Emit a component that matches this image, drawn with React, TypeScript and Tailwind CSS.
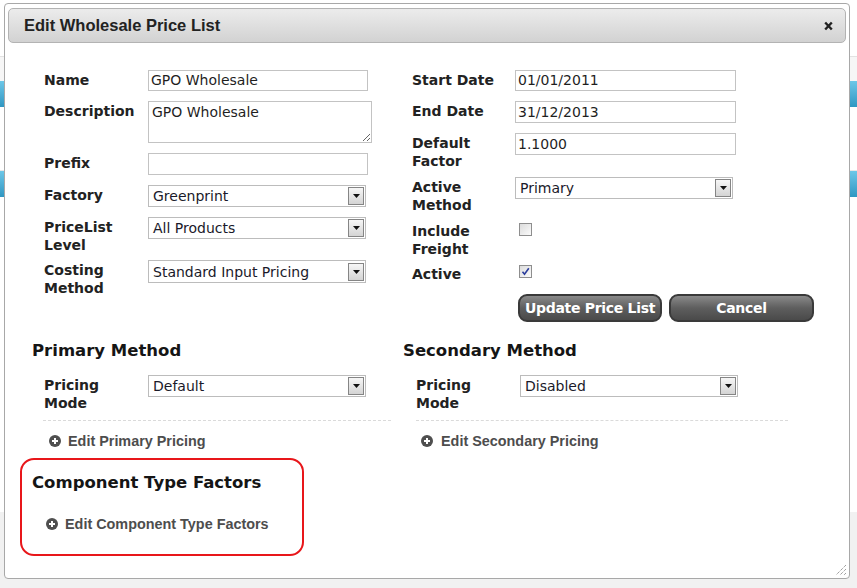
import React from "react";

const verdana = "font-['DejaVu_Sans','Verdana',sans-serif]";
const arial = "font-['Liberation_Sans','Arial',sans-serif]";

function Label({ children }: { children: React.ReactNode }) {
  return (
    <div className={`w-[104px] shrink-0 pt-[1px] text-[14px] leading-[18px] font-bold text-[#222] ${verdana}`}>
      {children}
    </div>
  );
}

function TextInput({ value, className = "" }: { value: string; className?: string }) {
  return (
    <input
      readOnly
      value={value}
      className={`border border-[#c3c3c3] bg-white px-[2px] text-[14px] text-[#1f1f1f] outline-none ${verdana} ${className}`}
    />
  );
}

function Select({ value, className = "" }: { value: string; className?: string }) {
  return (
    <div
      className={`flex items-center justify-between border border-[#bcbcbc] bg-white pl-[4px] pr-[1px] text-[14px] text-[#1a1a2a] ${verdana} ${className}`}
    >
      <span className="leading-none">{value}</span>
      <div className="flex h-[18px] w-[16px] items-center justify-center border border-[#858585] bg-gradient-to-b from-[#f6f6f6] to-[#d4d4d4]">
        <svg width="7" height="4" viewBox="0 0 7 4">
          <path d="M0 0h7L3.5 4z" fill="#111" />
        </svg>
      </div>
    </div>
  );
}

function Checkbox({ checked }: { checked?: boolean }) {
  return (
    <div className="flex h-[13px] w-[13px] items-center justify-center border border-[#8e8e8e] bg-gradient-to-br from-[#dcdcdc] to-[#fbfbfb]">
      {checked && (
        <svg width="9" height="9" viewBox="0 0 9 9">
          <path d="M1.5 4.8l2 2.4L7.8 1.2" stroke="#2b3d9c" strokeWidth="1.6" fill="none" />
        </svg>
      )}
    </div>
  );
}

function PlusCircle() {
  return (
    <svg width="12" height="12" viewBox="0 0 12 12" className="shrink-0">
      <circle cx="6" cy="6" r="6" fill="#4f4f4f" />
      <path d="M6 3v6M3 6h6" stroke="#fff" strokeWidth="2" />
    </svg>
  );
}

function EditLink({ text, gap }: { text: string; gap: string }) {
  return (
    <div className={`flex items-center ${gap} text-[14.4px] leading-[18px] font-bold text-[#4d4d4d] ${arial}`}>
      <PlusCircle />
      <span>{text}</span>
    </div>
  );
}

function DarkButton({ children, className = "" }: { children: React.ReactNode; className?: string }) {
  return (
    <button
      type="button"
      className={`h-[28px] rounded-[9px] border-2 border-[#3a3a3a] bg-gradient-to-b from-[#8a8a8a] via-[#5e5e5e] to-[#4a4a4a] text-[14px] font-bold tracking-[-0.3px] text-white ${verdana} ${className}`}
    >
      {children}
    </button>
  );
}

function Heading({ children }: { children: React.ReactNode }) {
  return (
    <h3 className={`h-[20px] text-[16.5px] leading-[20px] font-bold text-[#151515] ${verdana}`}>{children}</h3>
  );
}

export default function App() {
  return (
    <div className="relative h-[588px] w-[857px] overflow-hidden bg-white">
      {/* page behind the dialog */}
      <div className="flex flex-col">
        <div className="h-[57px] border-b border-[#e2e2e2]" />
        <div className="h-[24px] bg-[#f6f6f6]" />
        <div className="h-[26px] bg-gradient-to-b from-[#6cc7e8] to-[#2f97c2]" />
        <div className="h-[64px] border-b border-[#e6e6e6]" />
        <div className="h-[26px] bg-gradient-to-b from-[#6cc7e8] to-[#2f97c2]" />
        <div className="h-[315px]" />
        <div className="h-[80px] bg-[#f1f1f1]" />
      </div>

      {/* dialog */}
      <div className="absolute left-[4px] top-[3px] flex h-[576px] w-[846px] flex-col rounded-[4px] border border-[#a8a8a8] bg-white">
        <div className="mx-[3px] mt-[4px] flex h-[35px] items-center justify-between rounded-[5px] border border-[#b3b3b3] bg-gradient-to-b from-[#ececec] to-[#d2d2d2] pl-[15px] pr-[12px]">
          <span className={`text-[16.5px] font-bold text-[#222] ${arial}`}>Edit Wholesale Price List</span>
          <svg width="9" height="10" viewBox="0 0 9 10">
            <path d="M1.2 1.5l6.6 7M7.8 1.5l-6.6 7" stroke="#222" strokeWidth="2.4" />
          </svg>
        </div>

        {/* top form */}
        <div className="mt-[27px] flex pl-[39px]">
          <div className="flex w-[368px] flex-col">
            <div className="flex h-[31px] items-start">
              <Label>Name</Label>
              <TextInput value="GPO Wholesale" className="h-[21px] w-[220px]" />
            </div>
            <div className="flex h-[52px] items-start">
              <Label>Description</Label>
              <textarea
                readOnly
                value="GPO Wholesale"
                className={`h-[42px] w-[224px] border border-[#c3c3c3] px-[3px] pt-[1px] text-[14px] leading-[18px] text-[#1f1f1f] outline-none ${verdana}`}
              />
            </div>
            <div className="flex h-[32px] items-start">
              <Label>Prefix</Label>
              <TextInput value="" className="h-[22px] w-[220px]" />
            </div>
            <div className="flex h-[32px] items-start">
              <Label>Factory</Label>
              <Select value="Greenprint" className="h-[22px] w-[218px]" />
            </div>
            <div className="flex h-[43px] items-start">
              <Label>
                PriceList
                <br />
                Level
              </Label>
              <Select value="All Products" className="h-[22px] w-[218px]" />
            </div>
            <div className="flex items-start">
              <Label>
                Costing
                <br />
                Method
              </Label>
              <Select value="Standard Input Pricing" className="h-[23px] w-[218px]" />
            </div>
          </div>

          <div className="flex flex-col">
            <div className="flex h-[31px] items-start">
              <Label>Start Date</Label>
              <TextInput value="01/01/2011" className="ml-[-1px] h-[21px] w-[221px]" />
            </div>
            <div className="flex h-[32px] items-start">
              <Label>End Date</Label>
              <TextInput value="31/12/2013" className="ml-[-1px] h-[22px] w-[221px]" />
            </div>
            <div className="flex h-[44px] items-start">
              <Label>
                Default
                <br />
                Factor
              </Label>
              <TextInput value="1.1000" className="ml-[-1px] h-[22px] w-[221px]" />
            </div>
            <div className="flex h-[44px] items-start">
              <Label>
                Active
                <br />
                Method
              </Label>
              <Select value="Primary" className="ml-[-1px] h-[22px] w-[218px]" />
            </div>
            <div className="flex h-[43px] items-start">
              <Label>
                Include
                <br />
                Freight
              </Label>
              <div className="ml-[3px] mt-[2px]">
                <Checkbox />
              </div>
            </div>
            <div className="flex h-[30px] items-start">
              <Label>Active</Label>
              <div className="ml-[3px] mt-[1px]">
                <Checkbox checked />
              </div>
            </div>
            <div className="flex gap-[7px] pl-[106px]">
              <DarkButton className="w-[144px]">Update Price List</DarkButton>
              <DarkButton className="w-[145px]">Cancel</DarkButton>
            </div>
          </div>
        </div>

        {/* pricing methods */}
        <div className="mt-[19px] flex pl-[27px]">
          <div className="flex w-[371px] flex-col">
            <Heading>Primary Method</Heading>
            <div className="mt-[14px] flex h-[45px] items-start pl-[12px]">
              <Label>
                Pricing
                <br />
                Mode
              </Label>
              <Select value="Default" className="h-[22px] w-[218px]" />
            </div>
            <div className="ml-[11px] w-[348px] border-t border-dashed border-[#dadada]" />
            <div className="mt-[11px] pl-[17px]">
              <EditLink text="Edit Primary Pricing" gap="gap-[7px]" />
            </div>
          </div>
          <div className="flex flex-col">
            <Heading>Secondary Method</Heading>
            <div className="mt-[14px] flex h-[45px] items-start pl-[13px]">
              <Label>
                Pricing
                <br />
                Mode
              </Label>
              <Select value="Disabled" className="h-[22px] w-[218px]" />
            </div>
            <div className="ml-[13px] w-[372px] border-t border-dashed border-[#dadada]" />
            <div className="mt-[11px] pl-[18px]">
              <EditLink text="Edit Secondary Pricing" gap="gap-[8px]" />
            </div>
          </div>
        </div>

        {/* component type factors */}
        <div className="ml-[15px] mt-[8px] h-[98px] w-[284px] rounded-[14px] border-2 border-[#e8161a] pl-[10px] pt-[13px]">
          <Heading>Component Type Factors</Heading>
          <div className="mt-[22px] pl-[14px]">
            <EditLink text="Edit Component Type Factors" gap="gap-[7px]" />
          </div>
        </div>

        {/* resize grip */}
        <svg width="12" height="12" viewBox="0 0 12 12" className="absolute bottom-[2px] right-[2px]">
          <path d="M11 1L1 11M11 5L5 11M11 9L9 11" stroke="#777" strokeWidth="1" strokeDasharray="1 1" />
        </svg>
      </div>
    </div>
  );
}
